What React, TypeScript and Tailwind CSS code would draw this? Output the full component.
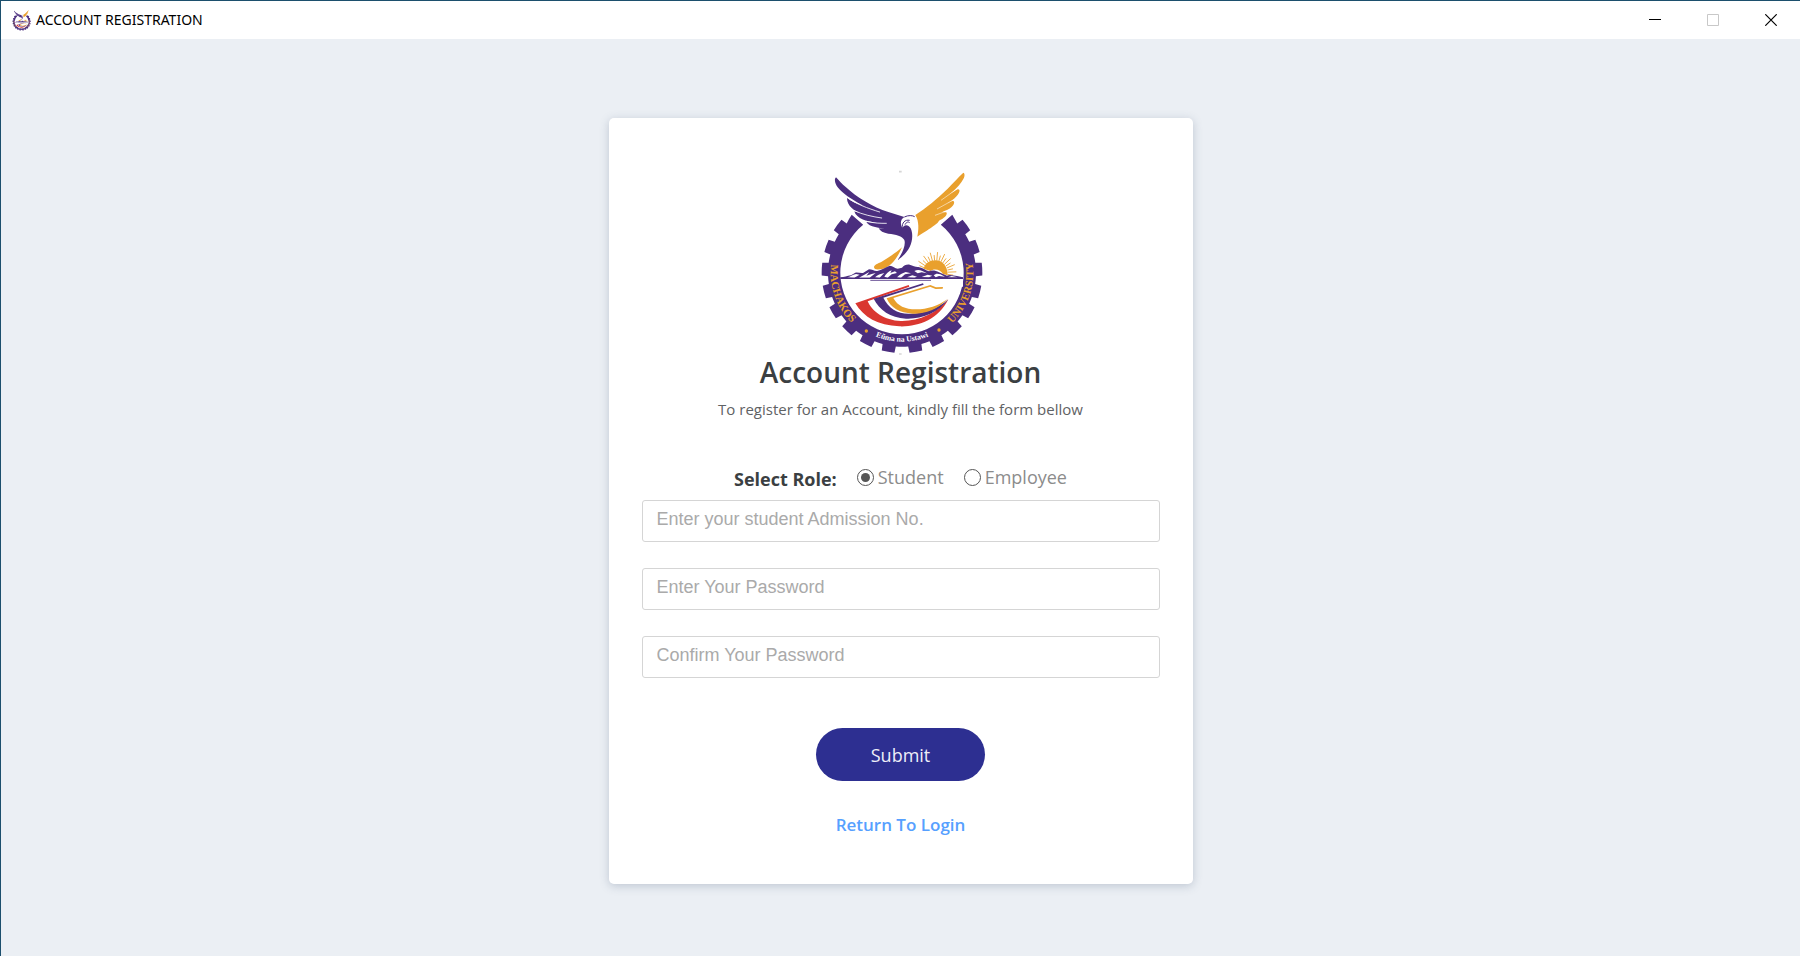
import { useState } from "react";

const CX = 303;
const CY = 338;
const TEETH = [10, 27, 43.5, 60, 76, 92.5, 109.5, 126.5];

function point(deg: number, r: number) {
  const a = (deg * Math.PI) / 180;
  return `${(CX + r * Math.sin(a)).toFixed(1)} ${(CY + r * Math.cos(a)).toFixed(1)}`;
}

function gearPath() {
  const all = [...TEETH].reverse().map((a) => -a).concat(TEETH);
  let d = `M${point(-141, 185)} L${point(-139, 230)}`;
  for (const a of all) {
    d += ` A222 222 0 0 0 ${point(a - 5.2, 222)} L${point(a - 4.6, 241)} A241 241 0 0 0 ${point(a + 4.6, 241)} L${point(a + 5.2, 222)}`;
  }
  d += ` L${point(139, 230)} L${point(141, 185)} A185 185 0 1 1 ${point(-141, 185)}Z`;
  return d;
}

const GEAR = gearPath();
const RAYS = Array.from({ length: 23 }, (_, i) => -108 + i * 10.3);

function Crest({ className, id }: { className: string; id: string }) {
  return (
    <svg className={className} viewBox="51 30 498 558" role="img" aria-label="Machakos University crest">
      <defs>
        <path id={`${id}-left`} d={`M${point(-103, 214)} A214 214 0 0 0 ${point(-30, 214)}`} />
        <path id={`${id}-right`} d={`M${point(35, 214)} A214 214 0 0 0 ${point(108, 214)}`} />
        <path id={`${id}-bottom`} d={`M${point(-60, 207)} A207 207 0 0 0 ${point(60, 207)}`} />
      </defs>
      <path d={GEAR} fill="#4b2e7f" />
      <g fill="#e9a02d" fontFamily="'Liberation Serif', serif" fontWeight="700" fontSize="32" textAnchor="middle">
        <text>
          <textPath href={`#${id}-left`} startOffset="44%">MACHAKOS</textPath>
        </text>
        <text>
          <textPath href={`#${id}-right`} startOffset="50%">UNIVERSITY</textPath>
        </text>
      </g>
      <text fill="#fff" fontFamily="'Liberation Serif', serif" fontWeight="700" fontSize="23" textAnchor="middle">
        <textPath href={`#${id}-bottom`} startOffset="50%">Eũma na Ustawi</textPath>
      </text>
      <circle cx="196" cy="513" r="5" fill="#e9a02d" />
      <circle cx="414" cy="510" r="5" fill="#e9a02d" />
      <path d="M294 35H302M294 582H302" stroke="#d6d6d6" strokeWidth="5" />

      <path
        fill="#4b2e7f"
        d="M105 52 C115 62 122 72 135 82 C165 110 215 142 262 156 L310 171 C298 178 297 192 304 205 C309 192 322 193 329 205 C337 222 334 244 326 261 C318 277 305 290 290 300 C305 278 315 253 310 240 C304 228 285 223 262 221 C247 219 237 213 233 205 L262 207 C235 204 205 202 196 186 L228 189 C200 185 166 177 160 154 L185 162 C160 154 137 137 138 113 C150 124 168 131 188 138 C155 119 97 88 102 56Z"
      />
      <g fill="none" stroke="#fff" strokeWidth="2.5" strokeLinecap="round">
        <path d="M139 113 C165 132 200 145 236 156" />
        <path d="M160 152 C185 164 215 170 242 174" />
        <path d="M197 184 C220 190 238 190 256 190" />
      </g>
      <path d="M310 171 C322 165 335 166 341 170 M304 205 C302 188 312 178 326 181 M312 194 C316 186 322 184 326 188" fill="none" stroke="#4b2e7f" strokeWidth="3" />
      <path
        fill="#e9a02d"
        d="M343 165 C375 143 408 118 440 86 C458 68 472 51 487 38 C494 42 490 54 482 65 C472 79 460 91 447 101 L470 88 C482 87 474 106 453 121 L440 129 L456 122 C466 126 454 145 432 152 L424 156 L436 157 C442 164 427 177 414 182 C411 190 394 200 377 212 C367 218 357 224 349 230 C353 210 355 184 343 165Z"
      />
      <path d="M462 91 L420 121 M446 126 L408 147 M432 155 L402 166" fill="none" stroke="#fff" strokeWidth="1.6" />
      <path fill="#e9a02d" d="M303 262 C286 278 262 293 242 305 C230 311 219 314 219 322 C220 331 233 329 247 326 C272 318 290 292 303 262Z" />

      <g stroke="#e9a02d" strokeWidth="2.6">
        {RAYS.map((deg, i) => {
          const a = (deg * Math.PI) / 180;
          const r = i % 2 ? 62 : 53;
          return (
            <line
              key={deg}
              x1={404 + 36 * Math.sin(a)}
              y1={338 - 36 * Math.cos(a)}
              x2={404 + r * Math.sin(a)}
              y2={338 - r * Math.cos(a)}
            />
          );
        })}
      </g>
      <path d="M330 320 L352 321 L384 334 L400 331 L440 346 L486 352 V380 H330Z" fill="#fff" />
      <path fill="#e9a02d" d="M368 326 C372 310 386 301 403 301 C424 301 440 318 440 346 L426 342 C420 328 398 324 388 333Z" />

      <path
        fill="#4b2e7f"
        d="M118 352 C130 352 138 348 150 346 L163 338 C172 337 178 340 186 339 L204 328 C213 328 220 334 229 333 C242 330 252 322 266 317 C276 317 282 325 290 326 L303 323 C309 316 316 313 326 314 C336 316 344 322 352 321 C364 322 372 330 384 334 C394 330 404 332 414 337 L438 347 C446 342 458 347 468 348 L486 352 V355 H118Z"
      />
      <g fill="#fff">
        <path d="M138 352 C148 350 154 345 165 342 L176 344 L160 353Z" />
        <path d="M174 353 L205 336 L196 347 L212 342 L224 339 L206 353Z" />
        <path d="M222 352 C230 345 238 341 250 339 L244 345 L236 353Z" />
        <path d="M250 350 C256 341 262 334 272 331 L268 339 L282 334 L288 339 L272 343 L260 353Z" />
        <path d="M288 352 C296 344 304 339 314 336 L330 340 L312 343 L300 353Z" />
        <path d="M318 352 L334 346 L348 350 L340 353Z" />
        <path d="M340 333 C348 329 355 329 364 333 L378 340 L362 337 L350 340Z" />
        <path d="M362 351 L380 344 L394 347 L384 352Z" />
        <path d="M398 346 C404 340 410 340 418 343 L432 350 L414 348 L404 352Z" />
        <path d="M440 352 L452 348 L470 352Z" />
      </g>
      <path d="M118 355 H486" stroke="#4b2e7f" strokeWidth="4" />
      <path d="M208 361 H390" stroke="#4b2e7f" strokeWidth="2.5" />

      <path fill="#da3730" d="M163 430 L323 375 L325 380 L200 424 C213 454 250 482 300 483 C355 484 405 461 442 418 C412 480 350 501 295 499 C230 496 188 472 163 430Z" />
      <path fill="#4b2e7f" d="M218 416 L366 370 L368 374 L247 413 C263 446 288 460 323 461 C365 462 408 448 442 418 C410 460 360 478 315 476 C268 473 235 450 218 416Z" />
      <path fill="#e9a02d" d="M257 415 L388 375 L405 382 L426 381 L425 386 L404 387 L387 380 L277 414 C290 438 312 448 345 448 C380 448 412 437 440 417 C408 449 373 462 335 461 C296 459 268 443 257 415Z" />
    </svg>
  );
}

const FIELD =
  "h-[42px] w-full rounded-[3px] border border-[#d5d5d5] bg-white px-3.5 pb-1 font-['Liberation_Sans',sans-serif] text-lg text-[#333] outline-none placeholder:text-[#aaa]";
const RADIO =
  "size-[17px] appearance-none rounded-full border border-[#555] bg-white p-[3px] checked:bg-[#555] checked:bg-clip-content";

export default function App() {
  const [role, setRole] = useState("student");
  return (
    <div className="flex min-h-screen flex-col border-t border-l border-[#1c4f6d] bg-[#ebeff4] font-['Open_Sans',sans-serif]">
      <header className="flex h-[38px] items-center justify-between bg-white pl-2.5">
        <div className="flex items-center gap-1">
          <Crest id="small" className="size-[21px]" />
          <h1 className="font-['Noto_Sans',sans-serif] text-sm text-black">ACCOUNT REGISTRATION</h1>
        </div>
        <div className="flex">
          <button type="button" aria-label="Minimize" className="flex h-[38px] w-[58px] items-center justify-center">
            <svg width="12" height="12" viewBox="0 0 12 12"><path d="M0 5.5H12" stroke="#000" /></svg>
          </button>
          <button type="button" aria-label="Maximize" disabled className="flex h-[38px] w-[58px] items-center justify-center">
            <svg width="12" height="12" viewBox="0 0 12 12"><path d="M.5.5h11v11H.5z" fill="none" stroke="#c8c8c8" /></svg>
          </button>
          <button type="button" aria-label="Close" className="flex h-[38px] w-[58px] items-center justify-center">
            <svg width="12" height="12" viewBox="0 0 12 12"><path d="M.3.3l11.4 11.4M11.7.3L.3 11.7" stroke="#000" strokeWidth="1.2" /></svg>
          </button>
        </div>
      </header>

      <main className="flex flex-1 justify-center pt-[79px] pb-[72px]">
        <form
          className="flex w-[584px] flex-col items-center self-start rounded-[5px] bg-white px-[33px] pt-[52px] pb-[45px] shadow-[0_2px_10px_rgba(60,80,110,0.25)]"
          onSubmit={(e) => e.preventDefault()}
        >
          <Crest id="large" className="h-[186px] w-[166px]" />
          <h2 className="text-[28px] leading-8 font-semibold text-[#3b3f42]">Account Registration</h2>
          <p className="mt-[9px] text-[15px] leading-6 text-[#5f6264]">To register for an Account, kindly fill the form bellow</p>

          <fieldset className="mt-10 flex h-8 items-center">
            <legend className="sr-only">Role</legend>
            <span className="mr-5 pt-1 text-lg font-bold text-[#3b3f42]">Select Role:</span>
            <label className="mr-5 flex items-center gap-1 text-lg text-[#8c8c8c]">
              <input type="radio" name="role" className={RADIO} checked={role === "student"} onChange={() => setRole("student")} />
              Student
            </label>
            <label className="flex items-center gap-1 text-lg text-[#8c8c8c]">
              <input type="radio" name="role" className={RADIO} checked={role === "employee"} onChange={() => setRole("employee")} />
              Employee
            </label>
          </fieldset>

          <div className="mt-[7px] flex w-full flex-col gap-[26px]">
            <input type="text" aria-label="Admission number" placeholder="Enter your student Admission No." className={FIELD} />
            <input type="password" aria-label="Password" placeholder="Enter Your Password" className={FIELD} />
            <input type="password" aria-label="Confirm password" placeholder="Confirm Your Password" className={FIELD} />
          </div>

          <button type="submit" className="mt-[50px] h-[53px] w-[169px] rounded-full bg-[#2d2f91] text-lg text-[#eeeef8]">
            Submit
          </button>
          <a href="#login" className="mt-[30px] text-[17px] leading-7 font-semibold text-[#56a0ff]">Return To Login</a>
        </form>
      </main>
    </div>
  );
}
